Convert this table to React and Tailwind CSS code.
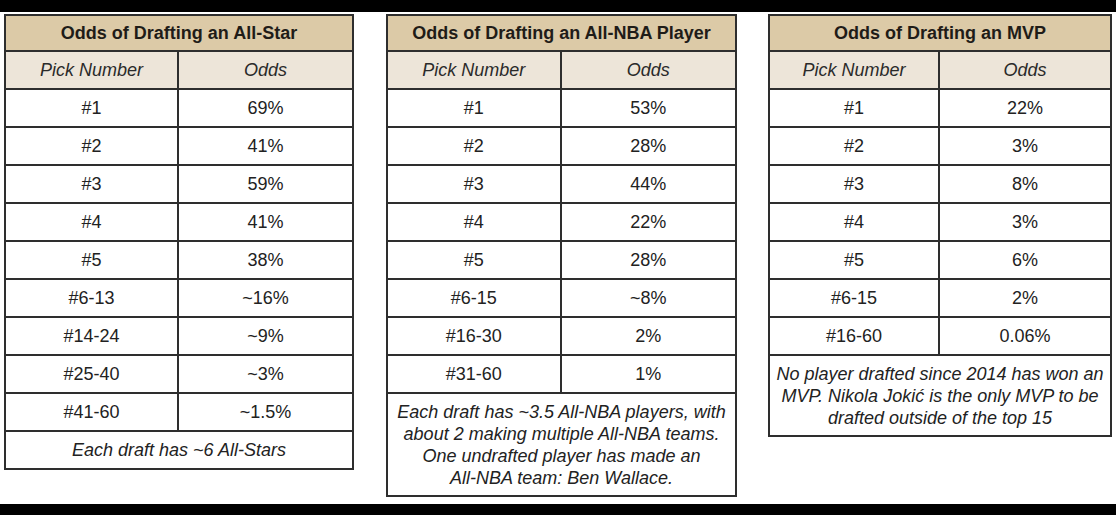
import React from "react";

const tables = [
  {
    title: "Odds of Drafting an All-Star",
    width: "w-[350px]",
    rows: [
      ["#1", "69%"],
      ["#2", "41%"],
      ["#3", "59%"],
      ["#4", "41%"],
      ["#5", "38%"],
      ["#6-13", "~16%"],
      ["#14-24", "~9%"],
      ["#25-40", "~3%"],
      ["#41-60", "~1.5%"],
    ],
    footer: ["Each draft has ~6 All-Stars"],
  },
  {
    title: "Odds of Drafting an All-NBA Player",
    width: "w-[351px]",
    rows: [
      ["#1", "53%"],
      ["#2", "28%"],
      ["#3", "44%"],
      ["#4", "22%"],
      ["#5", "28%"],
      ["#6-15", "~8%"],
      ["#16-30", "2%"],
      ["#31-60", "1%"],
    ],
    footer: [
      "Each draft has ~3.5 All-NBA players, with",
      "about 2 making multiple All-NBA teams.",
      "One undrafted player has made an",
      "All-NBA team: Ben Wallace.",
    ],
  },
  {
    title: "Odds of Drafting an MVP",
    width: "w-[344px]",
    rows: [
      ["#1", "22%"],
      ["#2", "3%"],
      ["#3", "8%"],
      ["#4", "3%"],
      ["#5", "6%"],
      ["#6-15", "2%"],
      ["#16-60", "0.06%"],
    ],
    footer: [
      "No player drafted since 2014 has won an",
      "MVP. Nikola Jokić is the only MVP to be",
      "drafted outside of the top 15",
    ],
  },
];

function OddsTable({ t }) {
  return (
    <div className={`${t.width} shrink-0 border-2 border-[#2e2e2e] bg-white`}>
      <div className="h-[36px] flex items-center justify-center bg-[#dccaa7] font-bold text-[#1f1c18] border-b-2 border-[#2e2e2e]">
        {t.title}
      </div>
      <div className="grid grid-cols-2 bg-[#ede5d9] italic text-[#2a2a2a] border-b-2 border-[#2e2e2e]">
        <div className="h-[36px] flex items-center justify-center border-r-2 border-[#2e2e2e]">Pick Number</div>
        <div className="h-[36px] flex items-center justify-center">Odds</div>
      </div>
      {t.rows.map(([a, b]) => (
        <div key={a} className="grid grid-cols-2 text-[#222] border-b-2 border-[#2e2e2e]">
          <div className="h-[36px] flex items-center justify-center border-r-2 border-[#2e2e2e]">{a}</div>
          <div className="h-[36px] flex items-center justify-center">{b}</div>
        </div>
      ))}
      <div
        className={`flex flex-col items-center justify-center italic text-[#222] ${
          t.footer.length > 1 ? "py-[6.5px] leading-[22px]" : "h-[36px]"
        }`}
      >
        {t.footer.map((l) => (
          <div key={l}>{l}</div>
        ))}
      </div>
    </div>
  );
}

export default function App() {
  return (
    <div
      className="w-[1116px] h-[515px] flex flex-col bg-black text-[18px]"
      style={{ fontFamily: '"Liberation Sans", Arial, sans-serif' }}
    >
      <div className="h-[12px] shrink-0 bg-black" />
      <div className="flex-1 bg-white pt-[2px] pl-[4px] flex items-start">
        <OddsTable t={tables[0]} />
        <div className="w-[32px] shrink-0" />
        <OddsTable t={tables[1]} />
        <div className="w-[31px] shrink-0" />
        <OddsTable t={tables[2]} />
      </div>
      <div className="h-[11px] shrink-0 bg-black" />
    </div>
  );
}
